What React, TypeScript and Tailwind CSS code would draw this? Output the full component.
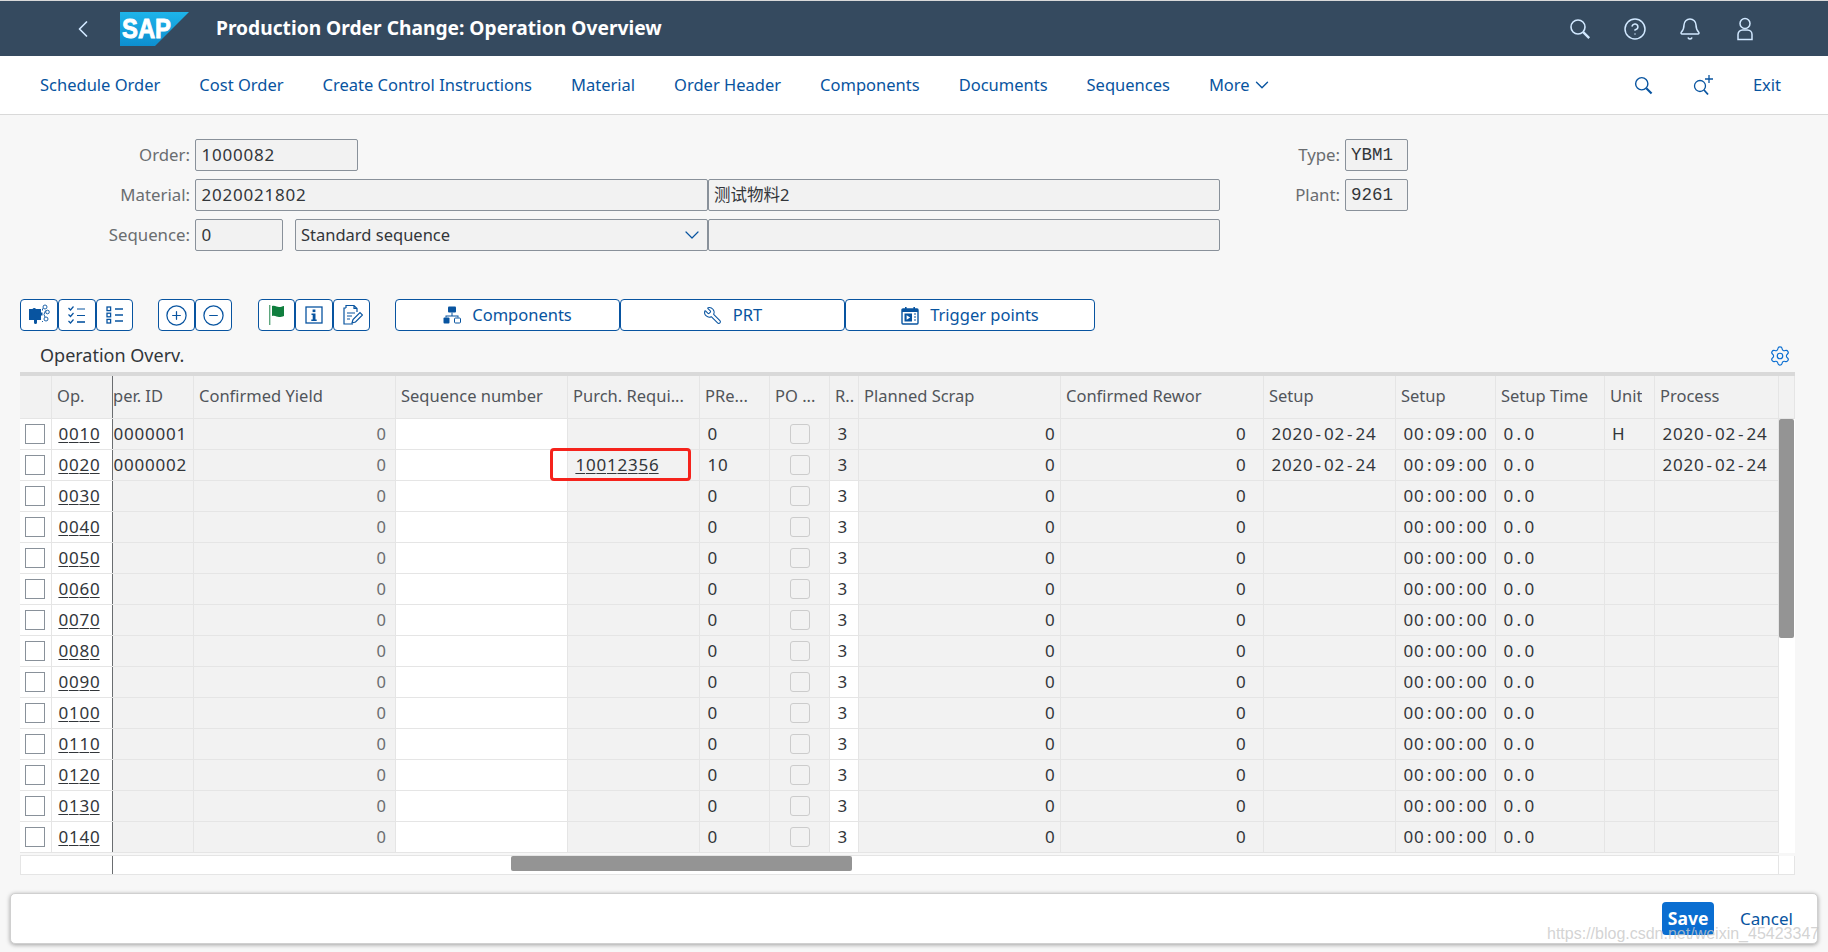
import React from 'react';
import { ChevronLeft, ChevronDown, CircleHelp, Bell, CirclePlus, CircleMinus, Wrench, Settings } from 'lucide-react';

const font = '[font-family:"Noto_Sans",sans-serif]';
const dark = 'text-[#32363a]';

const widths = [
  'w-[32px]', 'w-[61px]', 'w-[81px]', 'w-[202px]', 'w-[172px]', 'w-[132px]', 'w-[70px]', 'w-[60px]',
  'w-[29px]', 'w-[202px]', 'w-[203px]', 'w-[132px]', 'w-[100px]', 'w-[109px]', 'w-[50px]', 'w-[124px]',
];

const headers = ['', 'Op.', 'per. ID', 'Confirmed Yield', 'Sequence number', 'Purch. Requi...', 'PRe...', 'PO ...', 'R..', 'Planned Scrap', 'Confirmed Rewor', 'Setup', 'Setup', 'Setup Time', 'Unit', 'Process'];

const ops = ['0010', '0020', '0030', '0040', '0050', '0060', '0070', '0080', '0090', '0100', '0110', '0120', '0130', '0140'];

// the screen uses a fixed pitch font with plain zeros, none of the installed mono fonts has those
function Mono({ text, link }: { text: string; link?: boolean }) {
  return (
    <span className={`${dark} text-[17px] whitespace-nowrap`}>
      {text.split('').map((c, i) => (
        <span key={i} className={`inline-block w-[10.5px] text-center ${link ? 'underline underline-offset-2' : ''}`}>{c}</span>
      ))}
    </span>
  );
}

function SapLogo() {
  return (
    <svg width="69" height="34" viewBox="0 0 69 34" className="ml-[23px]">
      <defs>
        <linearGradient id="sapblue" x1="0" y1="0" x2="0" y2="1">
          <stop offset="0" stopColor="#1eb4ea" />
          <stop offset="1" stopColor="#0d8fd0" />
        </linearGradient>
      </defs>
      <polygon points="0,0 69,0 35,34 0,34" fill="url(#sapblue)" />
      <text x="2" y="26" fill="#fff" fontFamily="Liberation Sans" fontWeight="700" fontSize="27" textLength="49" lengthAdjust="spacingAndGlyphs" stroke="#fff" strokeWidth="0.9">SAP</text>
    </svg>
  );
}

function IconButton({ className, children }: { className: string; children: React.ReactNode }) {
  return (
    <button className={`${className} h-[32px] flex items-center justify-center border border-[#0854a0] rounded-[4px] bg-white text-[#0854a0]`}>
      {children}
    </button>
  );
}

function SearchIcon({ className }: { className: string }) {
  return (
    <svg viewBox="0 0 24 24" fill="none" stroke="currentColor" className={className}>
      <circle cx="10" cy="10" r="7" strokeWidth="1.6" />
      <path d="M15.2 15.2l6 6" strokeWidth="2.4" />
    </svg>
  );
}

function UserIcon({ className }: { className: string }) {
  return (
    <svg viewBox="0 0 24 24" fill="none" stroke="currentColor" strokeWidth="1.5" className={className}>
      <circle cx="12" cy="6.5" r="5" />
      <path d="M5 22.5v-5a4.5 4.5 0 0 1 4.5-4.5h5a4.5 4.5 0 0 1 4.5 4.5v5z" />
    </svg>
  );
}

function PuzzleIcon() {
  return (
    <svg width="22" height="22" viewBox="0 0 22 22">
      <path d="M1 5h3.500a2 2 0 0 1 3.500 0h5v3.500h1.500v3H13V16H9v2.500a1.500 1.500 0 0 1-3 0V16H1z" fill="#0854a0" />
      <g fill="none" stroke="#0854a0" strokeWidth="0.9">
        <circle cx="17" cy="3" r="2" />
        <circle cx="19.5" cy="8" r="1.800" />
        <circle cx="18" cy="15" r="2" />
        <path d="M14.500 4.500v2M17.500 6.500l-1.500 4 1 2.500M15 17.500h-1" />
      </g>
    </svg>
  );
}

function CheckListIcon() {
  return (
    <svg width="20" height="20" viewBox="0 0 20 20" fill="none" stroke="#0854a0" strokeWidth="1.2">
      <path d="M1.5 3l2 2 3-3.500M1.500 9.500l2 2 3-3.500M1.500 16l2 2 3-3.500" />
      <path d="M10 4h8M10 10.500h8" />
      <path d="M10 17h8" strokeWidth="1.600" />
    </svg>
  );
}

function ListBoxesIcon() {
  return (
    <svg width="20" height="20" viewBox="0 0 20 20" fill="none" stroke="#0854a0" strokeWidth="1.3">
      <rect x="2" y="2" width="3.6" height="3.6" />
      <rect x="2" y="8.2" width="3.6" height="3.6" />
      <rect x="2" y="14.4" width="3.6" height="3.6" />
      <path d="M10 4h8M10 10h8M10 16h8" />
    </svg>
  );
}

function FlagIcon() {
  return (
    <svg width="18" height="22" viewBox="0 0 18 22">
      <rect x="1" y="1" width="1.4" height="20" fill="#5fa77f" />
      <path d="M4 2c3-1 5 1 7 1s3-.5 5-1v10c-2 .6-3 1-5 1s-4-2-7-1z" fill="#107e3e" />
    </svg>
  );
}

function InfoIcon() {
  return (
    <svg width="18" height="18" viewBox="0 0 18 18">
      <rect x="1" y="1" width="16" height="16" fill="none" stroke="#0854a0" strokeWidth="1.3" />
      <rect x="7.6" y="3.5" width="2.8" height="2.6" fill="#0854a0" />
      <path d="M6.5 7.5h4v6h1.2v1.5H6.3v-1.5h1.4V9H6.5z" fill="#0854a0" />
    </svg>
  );
}

function DocEditIcon() {
  return (
    <svg width="22" height="22" viewBox="0 0 22 22" fill="none" stroke="#0854a0" strokeWidth="1.2">
      <path d="M5 4V1.5h8l3 3V8M13 1.500v3h3M5 4H3v16h9" />
      <path d="M6 9h8M6 12h5M6 15h3" />
      <path d="M11 19l1-3.500 7-7 2.500 2.500-7 7z" fill="#fff" />
    </svg>
  );
}

function NetworkIcon() {
  return (
    <svg width="18" height="18" viewBox="0 0 18 18" fill="#0854a0">
      <rect x="5" y="0.5" width="8" height="6" rx="1" />
      <path d="M8.500 6.500h1v3h6v2h-1v-1H3.500v1h-1v-2h6z" />
      <rect x="0.5" y="11.5" width="6" height="6" rx="1" />
      <rect x="11.5" y="12" width="6" height="5" rx="1" fill="none" stroke="#0854a0" />
    </svg>
  );
}

function CalendarPlayIcon() {
  return (
    <svg width="18" height="19" viewBox="0 0 18 19">
      <rect x="1" y="3" width="16" height="15" rx="1" fill="none" stroke="#0854a0" strokeWidth="1.4" />
      <rect x="1" y="3" width="16" height="3" fill="#0854a0" />
      <rect x="4" y="1" width="1.6" height="3" fill="#0854a0" />
      <rect x="12.4" y="1" width="1.6" height="3" fill="#0854a0" />
      <rect x="3.5" y="7.5" width="7.5" height="8" fill="#0854a0" />
      <path d="M5.600 9.200l3.600 2.300-3.600 2.300z" fill="#fff" />
      <path d="M13 8h2M13 11h2M13 14h2" stroke="#0854a0" strokeWidth="1.2" />
    </svg>
  );
}

function ZoomPlusIcon() {
  return (
    <svg width="22" height="22" viewBox="0 0 22 22" fill="none" stroke="#0854a0" strokeWidth="1.3">
      <circle cx="8" cy="12" r="5.5" />
      <path d="M12 16l4 4.500" strokeWidth="1.8" />
      <path d="M17 1v8M13 5h8" />
    </svg>
  );
}

function Field({ className, children }: { className: string; children?: React.ReactNode }) {
  return (
    <div className={`${className} h-[32px] flex items-center px-[5px] border border-[#89919a] rounded-[2px] bg-[#f2f2f2] ${dark} overflow-hidden`}>
      {children}
    </div>
  );
}

function Label({ className, children }: { className: string; children: React.ReactNode }) {
  return <div className={`${className} mr-[5px] text-right text-[#6a6d70] text-[16.8px]`}>{children}</div>;
}

function Cell({ i, white, className, children }: { i: number; white?: boolean; className?: string; children?: React.ReactNode }) {
  return (
    <div className={`${widths[i]} ${white ? 'bg-white' : 'bg-[#f2f2f2]'} ${className ?? ''} relative h-full shrink-0 flex items-center border-r border-[#e5e5e5] ${i === 1 ? 'border-r-[#6a6d70]' : ''}`}>
      {children}
    </div>
  );
}

function Row({ idx, op }: { idx: number; op: string }) {
  const first = idx === 0;
  const second = idx === 1;
  const started = first || second;
  return (
    <div className="flex h-[31px] border-b border-[#e5e5e5]">
      <Cell i={0} white className="pl-[5px]">
        <span className="w-[20px] h-[20px] border border-[#89919a] bg-white" />
      </Cell>
      <Cell i={1} white className="pl-[6px]">
        <Mono text={op} link />
      </Cell>
      <Cell i={2}>
        {started && <Mono text={first ? '0000001' : '0000002'} />}
      </Cell>
      <Cell i={3} className="justify-end pr-[9px] text-[#6a6d70]">0</Cell>
      <Cell i={4} white />
      <Cell i={5} className="pl-[7px]">
        {second && (
          <>
            <Mono text="10012356" link />
            <span className="absolute left-[-18px] top-[-2px] w-[141px] h-[33px] border-[3px] border-[#f5231c] rounded-[4px]" />
          </>
        )}
      </Cell>
      <Cell i={6} className="pl-[7px]">
        <Mono text={second ? '10' : '0'} />
      </Cell>
      <Cell i={7} className="justify-center">
        <span className="w-[20px] h-[20px] border border-[#cccccc] rounded-[3px] bg-[#f2f2f2]" />
      </Cell>
      <Cell i={8} white={!started} className="pl-[7px]">
        <Mono text="3" />
      </Cell>
      <Cell i={9} className="justify-end pr-[5px]"><Mono text="0" /></Cell>
      <Cell i={10} className="justify-end pr-[17px]"><Mono text="0" /></Cell>
      <Cell i={11} className="pl-[7px]">{started && <Mono text="2020-02-24" />}</Cell>
      <Cell i={12} className="pl-[7px]"><Mono text={started ? '00:09:00' : '00:00:00'} /></Cell>
      <Cell i={13} className="pl-[7px]"><Mono text="0.0" /></Cell>
      <Cell i={14} className="pl-[7px]">{first && <Mono text="H" />}</Cell>
      <Cell i={15} className="pl-[7px]">{started && <Mono text="2020-02-24" />}</Cell>
    </div>
  );
}

export default function App() {
  const navItems = ['Schedule Order', 'Cost Order', 'Create Control Instructions', 'Material', 'Order Header', 'Components', 'Documents', 'Sequences'];

  return (
    <div className={`${font} relative flex flex-col w-[1828px] h-[952px] overflow-hidden bg-[#f7f7f7] text-[16.5px]`}>
      {/* shell bar */}
      <header className="h-[56px] shrink-0 flex items-center bg-[#354a5f] border-t border-[#d9d9d9] text-[#d1e8ff]">
        <ChevronLeft className="ml-[69px] w-[28px] h-[28px]" strokeWidth={1.5} />
        <SapLogo />
        <h1 className="ml-[27px] text-[19.2px] font-bold text-white">Production Order Change: Operation Overview</h1>
        <div className="ml-auto mr-[71px] flex items-center gap-[31px]">
          <SearchIcon className="w-[24px] h-[24px]" />
          <CircleHelp className="w-[24px] h-[24px]" strokeWidth={1.5} />
          <Bell className="w-[24px] h-[24px]" strokeWidth={1.5} />
          <UserIcon className="w-[24px] h-[24px]" />
        </div>
      </header>

      {/* app toolbar */}
      <nav className="h-[59px] shrink-0 flex items-center bg-white border-b border-[#d9d9d9] text-[#0854a0]">
        <div className="ml-[40px] flex items-center gap-[39px]">
          {navItems.map((item) => (
            <span key={item}>{item}</span>
          ))}
          <span className="flex items-center gap-[1px]">
            More <ChevronDown className="w-[22px] h-[22px]" strokeWidth={1.5} />
          </span>
        </div>
        <div className="ml-auto mr-[47px] flex items-center">
          <SearchIcon className="w-[21px] h-[21px] mr-[38px]" />
          <ZoomPlusIcon />
          <span className="ml-[39px]">Exit</span>
        </div>
      </nav>

      {/* header form */}
      <section className="flex pt-[24px] shrink-0">
        <div className="w-[1220px] flex flex-col gap-[8px]">
          <div className="flex items-center">
            <Label className="w-[190px]">Order:</Label>
            <Field className="w-[163px]"><Mono text="1000082" /></Field>
          </div>
          <div className="flex items-center">
            <Label className="w-[190px]">Material:</Label>
            <Field className="w-[513px]"><Mono text="2020021802" /></Field>
            <Field className="w-[512px] text-[#6a6d70] [font-family:'Noto_Sans','Noto_Sans_CJK_SC',sans-serif]">测试物料2</Field>
          </div>
          <div className="flex items-center">
            <Label className="w-[190px]">Sequence:</Label>
            <Field className="w-[88px] mr-[12px]"><Mono text="0" /></Field>
            <Field className="w-[413px] justify-between pr-[3px]">
              Standard sequence
              <ChevronDown className="w-[24px] h-[24px] text-[#0854a0]" strokeWidth={1.2} />
            </Field>
            <Field className="w-[512px]" />
          </div>
        </div>
        <div className="flex flex-col gap-[8px]">
          <div className="flex items-center">
            <Label className="w-[120px]">Type:</Label>
            <Field className="w-[63px] [font-family:'Liberation_Mono',monospace] text-[17.5px]">YBM1</Field>
          </div>
          <div className="flex items-center">
            <Label className="w-[120px]">Plant:</Label>
            <Field className="w-[63px] [font-family:'Liberation_Mono',monospace] text-[17.5px]">9261</Field>
          </div>
        </div>
      </section>

      {/* table toolbar */}
      <section className="flex items-center pl-[20px] mt-[48px] shrink-0">
        <IconButton className="w-[38px]"><PuzzleIcon /></IconButton>
        <IconButton className="w-[38px]"><CheckListIcon /></IconButton>
        <IconButton className="w-[37px]"><ListBoxesIcon /></IconButton>
        <IconButton className="w-[37px] ml-[25px]"><CirclePlus className="w-[23px] h-[23px]" strokeWidth={1.3} /></IconButton>
        <IconButton className="w-[37px]"><CircleMinus className="w-[23px] h-[23px]" strokeWidth={1.3} /></IconButton>
        <IconButton className="w-[37px] ml-[26px]"><FlagIcon /></IconButton>
        <IconButton className="w-[38px]"><InfoIcon /></IconButton>
        <IconButton className="w-[37px]"><DocEditIcon /></IconButton>
        <IconButton className="w-[225px] ml-[25px] gap-[11px]"><NetworkIcon />Components</IconButton>
        <IconButton className="w-[225px] gap-[11px]"><Wrench className="w-[19px] h-[19px] -scale-x-100" strokeWidth={1.3} />PRT</IconButton>
        <IconButton className="w-[250px] gap-[11px]"><CalendarPlayIcon />Trigger points</IconButton>
      </section>

      {/* table title */}
      <section className={`h-[41px] shrink-0 flex items-center justify-between pl-[40px] pr-[37px] pt-[8px] text-[18px] ${dark}`}>
        <span>Operation Overv.</span>
        <Settings className="w-[22px] h-[22px] text-[#0a6ed1]" strokeWidth={1.3} />
      </section>

      {/* table */}
      <section className="ml-[20px] w-[1775px] shrink-0 border-t-[4px] border-[#d9d9d9]">
        <div className="flex">
          <div className="w-[1759px]">
            <div className="flex h-[43px] border-b border-[#e5e5e5] text-[#51555a]">
              {headers.map((h, i) => (
                <Cell key={i} i={i} className={`pb-[2px] ${i === 2 ? '' : 'pl-[5px]'}`}>
                  <span className="whitespace-nowrap overflow-hidden">{h}</span>
                </Cell>
              ))}
            </div>
            {ops.map((op, idx) => (
              <Row key={op} idx={idx} op={op} />
            ))}
          </div>
          <div className="w-[16px] flex flex-col bg-white">
            <div className="h-[43px] bg-[#f2f2f2] border-b border-r border-[#e5e5e5]" />
            <div className="w-[15px] h-[219px] bg-[#949494] rounded-[2px]" />
          </div>
        </div>
        <div className="h-[3px] border-b border-[#e5e5e5] w-[1759px]" />
        <div className="h-[19px] flex bg-white border-b border-x border-[#e5e5e5] w-full">
          <div className="w-[92px] h-full border-r border-[#6a6d70]" />
          <div className="ml-[398px] w-[341px] h-[15px] bg-[#949494] rounded-[2px]" />
          <div className="ml-auto w-[16px] h-full border-l border-[#e5e5e5]" />
        </div>
      </section>

      {/* footer */}
      <footer className="absolute left-[10px] top-[893px] w-[1808px] h-[51px] flex items-center justify-end bg-white rounded-[5px] border border-[#d0d0d0] shadow-[0_1px_4px_rgba(0,0,0,0.35)]">
        <button className="w-[52px] h-[33px] rounded-[4px] bg-[#0a6ed1] text-white font-bold text-[17.5px]">Save</button>
        <button className="ml-[26px] mr-[24px] text-[#0854a0] text-[17px]">Cancel</button>
      </footer>
      <span className="absolute left-[1547px] top-[922px] [font-family:'Liberation_Sans',sans-serif] text-[16px] text-[#c8c8c8]/80 whitespace-nowrap">https://blog.csdn.net/weixin_45423347</span>
    </div>
  );
}
